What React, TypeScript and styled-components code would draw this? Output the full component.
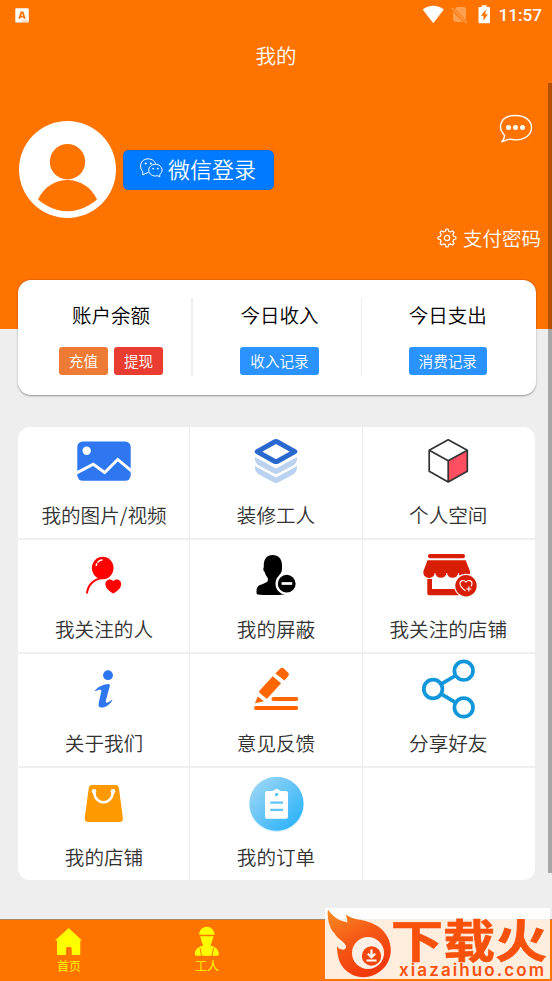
import React from "react";
import styled, { createGlobalStyle } from "styled-components";

const Global = createGlobalStyle`
  * { box-sizing: border-box; }
  body { margin: 0; background: #eee; font-family: "Noto Sans CJK SC", sans-serif; font-weight: 350; }
  svg { display: block; flex: none; }
`;

const Screen = styled.div`
  position: relative;
  width: 552px;
  height: 981px;
  overflow: hidden;
  display: flex;
  flex-direction: column;
  background: #eee;
`;
const Header = styled.header`
  height: 329px;
  flex: none;
  background: #ff7300;
  color: #fff;
  display: flex;
  flex-direction: column;
`;
const StatusBar = styled.div`
  height: 30px;
  padding: 0 10px 0 15px;
  display: flex;
  align-items: center;
  justify-content: space-between;
`;
const StatusRight = styled.div`
  display: flex;
  align-items: center;
  font: 500 17.2px/32px Roboto, sans-serif;
`;
const StatusIcons = styled.svg`
  margin-right: 6px;
`;
const Title = styled.h1`
  margin: 0;
  height: 52px;
  text-align: center;
  font-size: 20.5px;
  line-height: 50px;
  font-weight: inherit;
`;
const Profile = styled.div`
  display: flex;
  height: 136px;
  padding: 33px 19px 0 19px;
`;
const Login = styled.button`
  margin: 34.5px 0 0 7px;
  width: 151px;
  height: 40.5px;
  padding: 0 0 3px 16px;
  border: 1px solid #1670d5;
  border-radius: 5px;
  background: #007bff;
  color: #fff;
  display: flex;
  align-items: center;
  gap: 5px;
  font: inherit;
  font-size: 22px;
  line-height: 35px;
  white-space: nowrap;
`;
const Message = styled.div`
  margin-left: auto;
  margin-top: -1px;
`;
const PayPassword = styled.div`
  display: flex;
  align-items: center;
  justify-content: flex-end;
  gap: 6px;
  height: 38px;
  padding-right: 11px;
  font-size: 19.5px;
`;
const GearIcon = styled.svg`
  margin-top: 2px;
`;
const Balance = styled.section`
  flex: none;
  margin: -49px 16.5px 0 18px;
  height: 115px;
  padding-top: 18px;
  border-radius: 13px;
  background: #fff;
  box-shadow: 0 0.5px 2px rgba(0, 0, 0, 0.38);
  display: grid;
  grid-template-columns: 175px 169px 1fr;
  z-index: 1;
`;
const Account = styled.div<{ $shift?: number; $line?: number; $pull?: number }>`
  height: 78px;
  padding-left: ${(p) => p.$shift ?? 0}px;
  padding-right: ${(p) => p.$pull ?? 0}px;
  border-right: ${(p) => p.$line ?? 0}px solid #eee;
  display: flex;
  flex-direction: column;
  align-items: center;
  color: #000;
  font-size: 19.5px;
  line-height: 34px;
`;
const Actions = styled.div`
  display: flex;
  gap: 6px;
  margin-top: 15px;
`;
const Tag = styled.button<{ $color: string }>`
  height: 28px;
  padding: 0 10px;
  border: 0;
  border-radius: 3px;
  background: ${(p) => p.$color};
  color: #fff;
  font: inherit;
  font-size: 14.6px;
  line-height: 28px;
`;
const Menu = styled.section`
  flex: none;
  margin: 32px 0 0 18px;
  width: 516.5px;
  height: 453px;
  border-radius: 12px;
  overflow: hidden;
  background: #fff;
  display: grid;
  grid-template-columns: 172px 172px 172.5px;
  grid-template-rows: 113px 114px 114px 112px;
`;
const Cell = styled.div<{ $last?: boolean; $side: number }>`
  border-bottom: ${(p) => (p.$last ? 0 : 2)}px solid #f0f0f0;
  box-shadow: ${(p) => (p.$side === 0 ? "inset -1px 0 #ececec" : p.$side === 2 ? "inset 1px 0 #ececec" : "none")};
  display: flex;
  flex-direction: column;
  align-items: center;
  justify-content: flex-end;
  color: #333;
`;
const Label = styled.div`
  height: 45px;
  font-size: 19.6px;
  line-height: 43px;
`;
const Nav = styled.nav`
  margin-top: auto;
  height: 62px;
  border-top: 1px solid #a98464;
  background: #ff7300;
  display: grid;
  grid-template-columns: repeat(4, 138px);
  color: #ff0;
  font-size: 12px;
`;
const NavItem = styled.div`
  display: flex;
  flex-direction: column;
  align-items: center;
  padding-top: 8px;
  line-height: 20px;
`;
const Scrollbar = styled.div`
  position: absolute;
  right: 0;
  top: 83px;
  width: 4px;
  height: 790px;
  background: rgba(0, 0, 0, 0.3);
  z-index: 2;
`;
const Watermark = styled.div`
  position: absolute;
  left: 325px;
  top: 908px;
  width: 225px;
  height: 71px;
  display: flex;
  background: rgba(255, 255, 255, 0.87);
  color: #f8510c;
  z-index: 3;
`;
const Brand = styled.div`
  display: flex;
  flex-direction: column;
  margin-left: -4px;
`;
const BrandName = styled.div`
  height: 54px;
  font-size: 52px;
  line-height: 62px;
  font-weight: 700;
  -webkit-text-stroke: 0.8px #f8510c;
  white-space: nowrap;
  transform: scaleY(0.88);
`;
const BrandUrl = styled.div`
  margin-left: 8px;
  font: 600 17px/17px Inter, sans-serif;
  letter-spacing: 2.1px;
  white-space: nowrap;
`;

const Icon = ({ children }: { children?: React.ReactNode }) => (
  <svg width="64" height="64" viewBox="0 0 64 64" fill="none">{children}</svg>
);

const items: { label: string; icon: React.ReactNode }[] = [
  {
    label: "我的图片/视频",
    icon: (
      <Icon>
        <rect x="5.3" y="12.4" width="53.4" height="39.4" rx="5.5" fill="#2f77f1" />
        <circle cx="14.7" cy="21.8" r="4.2" fill="#fff" />
        <path d="M4.7 43.9 21.3 35.3 32.7 43.5 45.7 30.5 59.4 41.9" stroke="#fff" strokeWidth="2.9" />
      </Icon>
    ),
  },
  {
    label: "装修工人",
    icon: (
      <Icon>
        <path d="M13.2 22.6 30.5 13q1.5-.8 3 0l17.3 9.6L33.5 32.2q-1.5.8-3 0Z" stroke="#2a68cf" strokeWidth="5" strokeLinejoin="round" />
        <path d="M10.9 28 32 39.6 53.1 28c0 5-1.6 7.2-4.5 8.7L34.5 44.3q-2.5 1.4-5 0L15.4 36.7c-2.9-1.5-4.5-3.7-4.5-8.7Z" fill="#bbd1f0" />
        <path d="M10.9 37 32 48.6 53.1 37c0 5-1.6 7.2-4.5 8.7L34.5 53.3q-2.5 1.4-5 0L15.4 45.7c-2.9-1.5-4.5-3.7-4.5-8.7Z" fill="#bbd1f0" />
      </Icon>
    ),
  },
  {
    label: "个人空间",
    icon: (
      <Icon>
        <path d="M32.2 31.7 51.3 21.3V42.3L32.2 53Z" fill="#ff4f60" />
        <path d="M32.2 10.8 51.3 21.3V42.3L32.2 53 13.2 42.3V21.3ZM13.2 21.3 32.2 31.8 51.3 21.3M32.2 31.8V53" stroke="#333" strokeWidth="1.7" strokeLinejoin="round" />
      </Icon>
    ),
  },
  {
    label: "我关注的人",
    icon: (
      <Icon>
        <ellipse cx="30.7" cy="25" rx="10.8" ry="11.3" fill="#f00" />
        <path d="M15 50.5C15.5 43 21 36 31 35" stroke="#f00" strokeWidth="2" />
        <path d="M24.2 22.8C24.6 19.5 27 17.2 30.5 16.8" stroke="#fff" strokeWidth="1.5" strokeDasharray="2.5 1 8" />
        <path d="M41.3 38.2C39 35.2 33.4 36.2 33.4 41c0 4.4 4.3 7.4 7.9 9.6 3.6-2.2 7.9-5.2 7.9-9.6 0-4.8-5.6-5.8-7.9-2.8Z" fill="#f00" />
      </Icon>
    ),
  },
  {
    label: "我的屏蔽",
    icon: (
      <Icon>
        <path d="M19.8 22C19.8 16 23 12 28.5 12c6 0 9.5 4 9.5 10v3.5c0 4-2.3 6-3.2 8 0 4 2 5.5 6.2 7.5V51.2C32 52.5 20 52.3 12.8 51.2 12 46 13 43.5 16 42c4-1.6 8-2.5 8-5.5 0-2.5-2.5-3.5-3.3-7.5-1.7-1.5-1.7-3.5-.9-5Z" fill="#000" />
        <circle cx="42.7" cy="40.7" r="11.2" fill="#fff" />
        <circle cx="42.7" cy="40.7" r="8.9" fill="#000" />
        <path d="M37.6 40.5h10.6" stroke="#fff" strokeWidth="2.7" />
      </Icon>
    ),
  },
  {
    label: "我关注的店铺",
    icon: (
      <Icon>
        <rect x="12" y="11" width="37" height="4.2" rx="2" fill="#d81e06" />
        <path d="M11.5 17.3H49.7L54 28.3V30a5.4 4.7 0 0 1-11.2 0h-.7a5.4 4.7 0 0 1-11 0h-.7a5.4 4.7 0 0 1-11 0h-.7a5.4 4.7 0 0 1-11.3 0V28.3Z" fill="#d81e06" />
        <path d="M11.3 36h4.7V46H43v6.2H13q-1.7 0-1.7-1.7Z" fill="#d81e06" />
        <circle cx="50" cy="42.7" r="11.9" fill="#fff" />
        <circle cx="50" cy="42.7" r="10.7" fill="#d81e06" />
        <path d="M49.5 47.7c-3.5-2.5-5.5-4.5-5.5-7 0-3.5 4-4.2 6-1.6 2-2.6 6-1.9 6 1.4 0 1-.4 2-1 2.8M52.8 43.5v5M50.3 46h5" stroke="#fff" strokeWidth="1.1" />
      </Icon>
    ),
  },
  {
    label: "关于我们",
    icon: (
      <Icon>
        <circle cx="36" cy="18.2" r="4.9" fill="#2f77f1" />
        <path d="M23 33.5C27 29 32 27.2 36.5 27q1.8 0 1.3 2L33.9 43.5c-.6 2.7.8 3.4 5.8-.5.7-.4.7.4.3.9C37 48 33 50.6 29.5 50.6c-2.5 0-3.3-1.6-2.9-4.1L29.3 34.5c.5-2.3-2-2.2-5.5-.4-.8.4-1.2 0-.8-.6Z" fill="#2f77f1" />
      </Icon>
    ),
  },
  {
    label: "意见反馈",
    icon: (
      <Icon>
        <path d="M12 51.1H52.2M29.5 42H52.2" stroke="#f60" strokeWidth="4" strokeLinecap="round" />
        <path d="M28.7 19.3 37.1 26.2 23.7 41Q22.7 42 21.7 41L15.5 35.8Q14.5 34.8 15.5 33.7ZM13.7 39.5 20 44.3 10.9 46.3ZM36.3 11.5q1.8-1.5 3.5 0L44.2 15.7q1.5 1.6.1 3.3L40.5 23.5 31.4 16.5Z" fill="#f60" />
      </Icon>
    ),
  },
  {
    label: "分享好友",
    icon: (
      <Icon>
        <g stroke="#1296db" strokeWidth="3.7">
          <circle cx="47.7" cy="13.7" r="9.3" />
          <circle cx="17.1" cy="32" r="9.3" />
          <circle cx="47.7" cy="50.4" r="9.3" />
          <path d="M25.1 27.2 39.7 18.5M25.1 36.8 39.7 45.6" />
        </g>
      </Icon>
    ),
  },
  {
    label: "我的店铺",
    icon: (
      <Icon>
        <path d="M20.5 14H43.2q3.4 0 3.8 3.4L50.9 47q.3 3.9-3.5 3.9H16.2q-3.7 0-3.5-3.9L16.7 17.4Q17.2 14 20.5 14Z" fill="#ff9900" />
        <path d="M22 20.5C23 35 40 35 41 20.5" stroke="#fff" strokeWidth="2.6" />
        <circle cx="22" cy="20.3" r="2.3" fill="#fff" />
        <circle cx="41" cy="20.3" r="2.3" fill="#fff" />
      </Icon>
    ),
  },
  {
    label: "我的订单",
    icon: (
      <Icon>
        <defs>
          <linearGradient id="order" x1="0.15" y1="0.15" x2="0.85" y2="0.85">
            <stop stopColor="#93d3f5" />
            <stop offset="1" stopColor="#32b5fa" />
          </linearGradient>
        </defs>
        <circle cx="32.5" cy="33.5" r="27.6" fill="#d4f0fd" />
        <circle cx="32.5" cy="32.7" r="27" fill="url(#order)" />
        <path d="M23 20h6q.5-1.2 2.2-1.2a1.6 1.6 0 0 1 3 0q1.7 0 2.2 1.2H42q2 0 2 2V45.7q0 2-2 2H23q-2 0-2-2V22q0-2 2-2Z" fill="#fff" />
        <circle cx="32.6" cy="23.5" r="1.7" fill="#5fc3f4" />
        <path d="M26.3 31.7H39M26.3 38.8H39" stroke="#5fc3f4" strokeWidth="2.3" />
      </Icon>
    ),
  },
  { label: "", icon: null },
];

export default function App() {
  return (
    <>
      <Global />
      <Screen>
        <Header>
          <StatusBar>
            <svg width="14" height="15" viewBox="0 0 14 15">
              <rect x="0.3" y="0.3" width="13.5" height="14.3" rx="1.2" fill="#fff" />
              <path d="M4.2 10.8 6.3 4.3h1.4l2.1 6.5M5.2 8.7h3.6" fill="none" stroke="#ff7300" strokeWidth="1.8" />
              <path d="M7 13h6" stroke="#ffb87c" />
            </svg>
            <StatusRight>
              <StatusIcons width="70" height="20" viewBox="0 0 70 20">
                <path d="M.7 4.5C7-.5 15.5-.5 21.8 4.5L11.3 18.2Z" fill="#fff" />
                <path d="M35 2h7.500q1.500 0 1.500 1.500V17H33L31 15V6Z" fill="#ff9f50" />
                <path d="M29.5 3 45 18.5" stroke="#ff7300" strokeWidth="3.2" />
                <path d="M29.7 3 45 18.3" stroke="#ff9f50" strokeWidth="1.5" />
                <path d="M57.2 2h2.6V.3h5V2h2.500q.7 0 .7.700V17.500q0 .7-.7.700H57.200q-.7 0-.7-.7V2.700q0-.7.700-.7Z" fill="#fff" />
                <path d="M63.7 4.5 59 10.8h2.4V15.7L65.9 9.3H63.4Z" fill="#ff7300" />
              </StatusIcons>
              11:57
            </StatusRight>
          </StatusBar>
          <Title>我的</Title>
          <Profile>
            <svg width="97" height="109" viewBox="0 0 97 109">
              <circle cx="48.5" cy="54.5" r="48.5" fill="#fff" />
              <circle cx="48.5" cy="46.7" r="17.7" fill="#ff7300" />
              <path d="M19 84.5C31 58.5 66 58.5 78 84.5 60 100 37 100 19 84.5Z" fill="#ff7300" />
            </svg>
            <Login>
              <svg width="23" height="20" viewBox="0 0 23 20" fill="none" stroke="#fff" strokeWidth="1">
                <path d="M8.5 14.5 6 15.2 2.8 17V13.8C-1 10-.3 1 8 .8c4.5 0 7.5 3 7.5 5.5" />
                <path d="M15.5 6.3c3.5 0 6.5 2.5 6.5 5.8 0 2-.8 3.2-2.2 4.3V18.8L17.5 17.7C12.5 19 8.7 15.8 8.7 12.1 8.7 9 11.5 6.3 15.5 6.3Z" />
                <g fill="#fff" stroke="none">
                  <circle cx="5.7" cy="5.4" r="1" />
                  <circle cx="10.8" cy="5.4" r="1" />
                  <circle cx="13.2" cy="10.6" r=".9" />
                  <circle cx="17.8" cy="10.6" r=".9" />
                </g>
              </svg>
              微信登录
            </Login>
            <Message>
              <svg width="34" height="30" viewBox="0 0 34 30">
                <path d="M5.5 21.2C-1.5 14 .5 1.5 16.5 1.5 26 1.5 32.5 6.5 32.5 13.5c0 9-10 14-20 11.8C10 24.6 7 26.5 3.2 27.5 4.5 25.5 5.8 23.5 5.5 21.2Z" fill="none" stroke="#fff" strokeWidth="1.4" />
                <g fill="#fff">
                  <circle cx="9.5" cy="13.6" r="2.5" />
                  <circle cx="16.5" cy="13.6" r="2.5" />
                  <circle cx="23.5" cy="13.6" r="2.5" />
                </g>
              </svg>
            </Message>
          </Profile>
          <PayPassword>
            <GearIcon width="20" height="20" viewBox="0 0 20 20" fill="none" stroke="#fff" strokeWidth="1.2" strokeLinejoin="round">
              <path d="M8.3 3.3 9 1h2l.7 2.3 1.7.7 2.1-1.1 1.5 1.5L15.9 6.5l.7 1.7 2.3.8v2l-2.3.7-.7 1.7 1.1 2.1-1.5 1.5-2.1-1.1-1.7.7L11 19H9l-.7-2.4-1.7-.7L4.5 17 3 15.5l1.1-2.1-.7-1.7L1 11V9l2.4-.8.7-1.7L3 4.4l1.5-1.5L6.6 4Z" />
              <circle cx="10" cy="10" r="2.7" />
            </GearIcon>
            支付密码
          </PayPassword>
        </Header>
        <Balance>
          <Account $shift={13} $line={2}>账户余额<Actions><Tag $color="#ee7b35">充值</Tag><Tag $color="#e93d32">提现</Tag></Actions></Account>
          <Account $shift={5} $line={1}>今日收入<Actions><Tag $color="#2b93ff">收入记录</Tag></Actions></Account>
          <Account $pull={2}>今日支出<Actions><Tag $color="#2b93ff">消费记录</Tag></Actions></Account>
        </Balance>
        <Menu>
          {items.map((item, i) => (
            <Cell key={i} $side={i % 3} $last={i > 8}>
              {item.icon}
              <Label>{item.label}</Label>
            </Cell>
          ))}
        </Menu>
        <Nav>
          <NavItem>
            <svg width="28" height="28" viewBox="0 0 28 28">
              <path d="M13.7 0 27 12.5H25.3V26.2q0 .8-.8.8H16.7V20.5q0-1.5-1.5-1.5H12.5q-1.5 0-1.5 1.5V27H3q-1 0-1-1V12.5H0Z" fill="#ff0" />
            </svg>
            首页
          </NavItem>
          <NavItem>
            <svg width="28" height="28" viewBox="0 0 28 28" overflow="visible">
              <path d="M6 6.7C6.5 2 9 0 11.5-.8q2.3-1 4.7 0C18.7 0 21 2 21.7 6.7Z" fill="#ff0" />
              <path d="M7 8.2H20.7L19.7 10.5C19.5 14 18 15.5 17.5 17.5 21 19 25.5 20 25.8 26q0 1.7-1.3 1.7H3.2q-1.4 0-1.4-1.7C2.2 20 6.5 19 10.2 17.5 9.7 15.5 8.2 14 8 10.5Z" fill="#ff0" />
              <path d="M7 20 8.7 28M20.6 20 18.9 28" stroke="#ff7300" strokeWidth="1" />
            </svg>
            工人
          </NavItem>
        </Nav>
        <Scrollbar />
        <Watermark>
          <svg width="70" height="71" viewBox="0 0 70 71">
            <defs>
              <linearGradient id="flame" x1="0" y1="0" x2="0.5" y2="1">
                <stop stopColor="#f98d22" />
                <stop offset="0.5" stopColor="#f65b16" />
                <stop offset="1" stopColor="#f33a0d" />
              </linearGradient>
            </defs>
            <path d="M3 1.5C7 8 14 13 22.500 14.500L21 6.500C28 13 41 10 54 19 65 27 69 42 63 54 56 68 38 73 26 66 15 60 12 50 12 37 14 41 18 42.500 20.500 40.500 22.500 38 19 35 15 32 8 26 1 15 3 1.500Z" fill="url(#flame)" />
            <path d="M12 38C14 42 19 42.5 20.5 40 22 37 18 34 14.5 31 11 29 10 25 8 24 7 29 8 34 12 38Z" fill="#fff1dd" />
            <circle cx="43" cy="45" r="16" fill="#fff0e5" />
            <circle cx="46.5" cy="48" r="9.7" fill="#f4460e" />
            <path d="M46.5 41.5V48.5M42.8 45.8 46.5 49.3 50.2 45.8M41.5 52.5H51.5" fill="none" stroke="#fff" strokeWidth="2.2" />
          </svg>
          <Brand>
            <BrandName>下载火</BrandName>
            <BrandUrl>xiazaihuo.com</BrandUrl>
          </Brand>
        </Watermark>
      </Screen>
    </>
  );
}
